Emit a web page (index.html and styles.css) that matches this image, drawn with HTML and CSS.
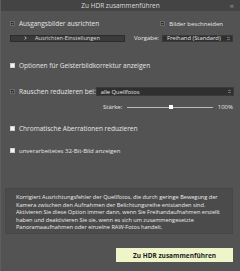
FILE: index.html
```html
<!DOCTYPE html>
<html lang="de">
<head>
  <meta charset="UTF-8">
  <title>Zu HDR zusammenführen</title>
  <link rel="stylesheet" href="styles.css">
</head>
<body>
  <div class="dialog">
    <div class="titlebar">
      <span class="title">Zu HDR zusammenführen</span>
      <span class="close">×</span>
    </div>

    <div class="content">
      <div class="row row-align">
        <label class="check">
          <span class="box checked"><svg viewBox="0 0 5 5"><path d="M1 2.6 L2.1 3.7 L4 1.2" /></svg></span>
          <span>Ausgangsbilder ausrichten</span>
        </label>
        <label class="check crop">
          <span class="box checked"><svg viewBox="0 0 5 5"><path d="M1 2.6 L2.1 3.7 L4 1.2" /></svg></span>
          <span>Bilder beschneiden</span>
        </label>
      </div>

      <div class="row row-settings">
        <div class="settings-btn">
          <svg class="chev" viewBox="0 0 4 5"><path d="M1 0.5 L3 2.5 L1 4.5" /></svg>
          <span>Ausrichten-Einstellungen</span>
        </div>
        <span class="label">Vorgabe:</span>
        <div class="select preset">
          <span>Freihand (Standard)</span>
          <svg class="spin" viewBox="0 0 4 6"><path d="M0.5 2.3 L2 0.8 L3.5 2.3 M0.5 3.7 L2 5.2 L3.5 3.7" /></svg>
        </div>
      </div>

      <div class="row row-ghost">
        <label class="check">
          <span class="box"></span>
          <span>Optionen für Geisterbildkorrektur anzeigen</span>
        </label>
      </div>

      <div class="row row-noise">
        <label class="check">
          <span class="box checked"><svg viewBox="0 0 5 5"><path d="M1 2.6 L2.1 3.7 L4 1.2" /></svg></span>
          <span>Rauschen reduzieren bei:</span>
        </label>
        <div class="select sources">
          <span>alle Quellfotos</span>
          <svg class="spin" viewBox="0 0 4 6"><path d="M0.5 2.3 L2 0.8 L3.5 2.3 M0.5 3.7 L2 5.2 L3.5 3.7" /></svg>
        </div>
      </div>

      <div class="row row-strength">
        <span class="label">Stärke:</span>
        <div class="slider">
          <div class="track"></div>
          <div class="thumb"></div>
        </div>
        <span class="value">100%</span>
      </div>

      <div class="row row-chroma">
        <label class="check">
          <span class="box"></span>
          <span>Chromatische Aberrationen reduzieren</span>
        </label>
      </div>

      <div class="row row-raw">
        <label class="check small">
          <span class="box"></span>
          <span>unverarbeitetes 32-Bit-Bild anzeigen</span>
        </label>
      </div>

      <div class="desc">
        Korrigiert Ausrichtungsfehler der Quellfotos, die durch geringe Bewegung der<br>
        Kamera zwischen den Aufnahmen der Belichtungsreihe entstanden sind.<br>
        Aktivieren Sie diese Option immer dann, wenn Sie Freihandaufnahmen erstellt<br>
        haben und deaktivieren Sie sie, wenn es sich um zusammengesetzte<br>
        Panoramaaufnahmen oder einzelne RAW-Fotos handelt.
      </div>

      <div class="footer">
        <div class="merge-btn">Zu HDR zusammenführen</div>
      </div>
    </div>
  </div>
</body>
</html>
```

FILE: styles.css
```css
* {
  margin: 0;
  padding: 0;
  box-sizing: border-box;
}

html, body {
  width: 240px;
  height: 271px;
  overflow: hidden;
  background: #535353;
  font-family: "Open Sans", "Liberation Sans", sans-serif;
  font-size: 6.5px;
  color: #e6e6e6;
}

.dialog {
  width: 240px;
  height: 271px;
  display: flex;
  flex-direction: column;
  border-left: 1px solid #5e5e5e;
}

.titlebar {
  position: relative;
  height: 11px;
  background: #444444;
  display: flex;
  align-items: center;
  justify-content: center;
  color: #dcdcdc;
  font-size: 6.5px;
}

.close {
  position: absolute;
  right: 6px;
  top: 0;
  line-height: 11px;
  font-size: 8px;
  color: #9a9a9a;
}

.content {
  display: flex;
  flex-direction: column;
  padding: 0 7px 0 9px;
}

.row {
  display: flex;
  align-items: center;
  height: 9px;
}

.row-align { margin-top: 8px; }
.row-settings { margin-top: 6px; height: 8px; }
.row-ghost { margin-top: 19px; }
.row-noise { margin-top: 17px; }
.row-strength { margin-top: 7px; height: 8px; }
.row-chroma { margin-top: 13px; }
.row-raw { margin-top: 13px; }

.check {
  display: flex;
  align-items: center;
  gap: 4px;
  white-space: nowrap;
}

.check.small {
  font-size: 6px;
}

.crop {
  margin-left: auto;
  margin-right: 10px;
  font-size: 6px;
}

.box {
  width: 5px;
  height: 5px;
  background: #f4f4f4;
  border: 1px solid #cfcfcf;
  display: flex;
  flex-shrink: 0;
}

.box.checked {
  background: #262626;
  border-color: #6a6a6a;
}

.box svg {
  width: 100%;
  height: 100%;
}

.box path {
  fill: none;
  stroke: #ffffff;
  stroke-width: 0.9;
}

.settings-btn {
  width: 115px;
  height: 7px;
  background: #3a3a3a;
  border: 1px solid #2c2c2c;
  display: flex;
  align-items: center;
  font-size: 5.6px;
  color: #dddddd;
}

.chev {
  width: 3px;
  height: 4px;
  margin-left: 13px;
  margin-right: 8px;
}

.chev path {
  fill: none;
  stroke: #eeeeee;
  stroke-width: 1;
}

.label {
  white-space: nowrap;
}

.row-settings .label {
  margin-left: 9px;
  font-size: 6px;
}

.select {
  height: 8px;
  background: #2f2f2f;
  border: 1px solid #3a3a3a;
  display: flex;
  align-items: center;
  padding-left: 4px;
  white-space: nowrap;
  font-size: 5.8px;
  overflow: hidden;
}

.select span {
  flex: 1;
}

.spin {
  width: 3px;
  height: 5px;
  margin-right: 2px;
  flex-shrink: 0;
}

.spin path {
  fill: none;
  stroke: #cfcfcf;
  stroke-width: 0.8;
}

.preset {
  margin-left: auto;
  width: 71px;
  height: 7px;
}

.sources {
  margin-left: auto;
  width: 139px;
  height: 9px;
  margin-right: -1px;
}

.row-strength .label {
  margin-left: 93px;
  font-size: 6px;
}

.slider {
  position: relative;
  width: 86px;
  height: 8px;
  margin-left: 5px;
}

.track {
  position: absolute;
  left: 0;
  right: 0;
  top: 4px;
  height: 1px;
  background: #bdbdbd;
}

.thumb {
  position: absolute;
  left: 42px;
  top: 2px;
  width: 4px;
  height: 4px;
  background: #ffffff;
}

.value {
  margin-left: auto;
  font-size: 6px;
}

.desc {
  margin-top: 33px;
  margin-left: -5px;
  height: 46px;
  background: #4b4b4b;
  border: 1px solid #474747;
  padding: 5px 0 0 10px;
  font-size: 5.6px;
  line-height: 7.5px;
  color: #ececec;
  white-space: nowrap;
}

.footer {
  display: flex;
  justify-content: flex-end;
  margin-top: 14px;
}

.merge-btn {
  width: 117px;
  height: 14px;
  background: #eef6c9;
  color: #1e1e1e;
  font-weight: bold;
  font-size: 6.5px;
  display: flex;
  align-items: center;
  justify-content: center;
}
```
